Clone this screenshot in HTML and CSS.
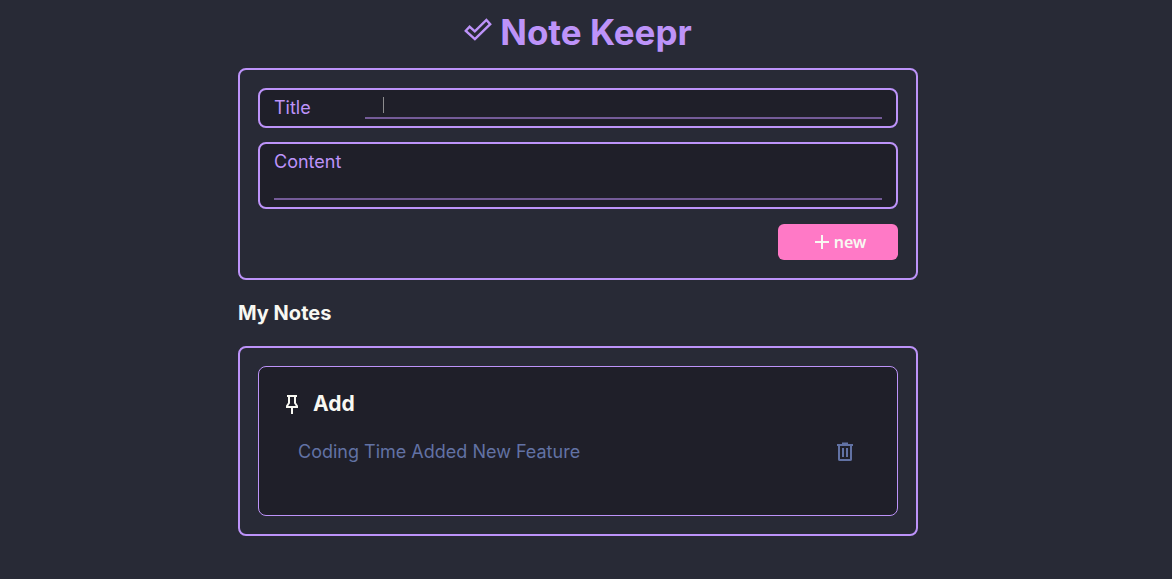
FILE: index.html
```html
<!DOCTYPE html>
<html lang="en">
<head>
<meta charset="utf-8">
<title>Note Keepr</title>
<meta name="viewport" content="width=device-width, initial-scale=1">
<link rel="stylesheet" href="styles.css">
</head>
<body>
<main class="app">
  <h1 class="brand">
    <svg class="brand-icon" viewBox="0 0 28 24" aria-hidden="true"><path d="M1.8 12.8 5.6 8.6 10.8 13.4 22.4 2 26.2 6.2 10.9 21.2Z"/></svg>
    <span>Note Keepr</span>
  </h1>

  <form class="panel form">
    <div class="field field-row">
      <label class="label" for="title">Title</label>
      <div class="input-wrap">
        <input class="input" id="title" type="text" autocomplete="off">
        <span class="caret"></span>
      </div>
    </div>
    <div class="field field-stack">
      <label class="label" for="content">Content</label>
      <textarea class="input area" id="content" rows="1"></textarea>
    </div>
    <button class="new-button" type="button">
      <svg class="plus" viewBox="0 0 16 16" aria-hidden="true"><path d="M1 8H15M8 1V15"/></svg>
      <span>new</span>
    </button>
  </form>

  <h2 class="section-title">My Notes</h2>

  <section class="panel">
    <article class="note">
      <h3 class="note-title">
        <svg class="pin" viewBox="0 0 14 20" aria-hidden="true"><path d="M2 2H12M4 2V9L2 12V13.5M10 2V9L12 12V13.5M1 13H13M7 13V20"/></svg>
        <span>Add</span>
      </h3>
      <div class="note-body">
        <p class="note-text">Coding Time Added New Feature</p>
        <button class="delete" type="button" aria-label="Delete note">
          <svg class="trash" viewBox="0 0 18 20" aria-hidden="true"><path d="M1 3H17M6 1.5H12M3 3V17.5Q3 18 4 18H14Q15 18 15 17.5V3M7 6V15M11 6V15"/></svg>
        </button>
      </div>
    </article>
  </section>
</main>
</body>
</html>
```
FILE: styles.css
```css
* {
  box-sizing: border-box;
}

body {
  margin: 0;
  padding: 12px 16px 40px 0;
  background: #282a36;
  color: #f8f8f2;
  font-family: Inter, sans-serif;
  font-size: 18px;
}

h1, h2, h3, p {
  margin: 0;
}

svg {
  display: block;
  fill: none;
  stroke: currentColor;
  stroke-width: 2;
}

.app {
  max-width: 680px;
  margin: 0 auto;
}

.brand {
  display: flex;
  justify-content: center;
  gap: 8px;
  margin-bottom: 16px;
  color: #bd93f9;
  font-size: 35px;
  line-height: 40px;
}

.brand-icon {
  width: 28px;
  height: 24px;
  margin-top: 6px;
  stroke-width: 2.4;
}

.panel {
  padding: 18px;
  border: 2px solid #bd93f9;
  border-radius: 8px;
}

.form {
  display: flex;
  flex-direction: column;
  gap: 14px;
}

.field {
  display: flex;
  padding: 6px 14px 7px;
  border: 2px solid #bd93f9;
  border-radius: 8px;
  background: #1f1f29;
}

.field-row {
  height: 40px;
}

.field-stack {
  flex-direction: column;
}

.label {
  width: 91px;
  color: #bd93f9;
  line-height: 24px;
}

.input-wrap {
  position: relative;
  display: flex;
  flex: 1;
}

.input {
  width: 100%;
  min-width: 0;
  padding: 0 18px;
  border: 0;
  border-bottom: 2px solid #745b98;
  outline: 0;
  background: transparent;
  color: #f8f8f2;
  font: inherit;
}

.area {
  display: block;
  height: 26px;
  resize: none;
  overflow: hidden;
}

.caret {
  position: absolute;
  top: 1px;
  left: 18px;
  width: 1px;
  height: 16px;
  background: #8d8c8e;
}

.new-button {
  display: flex;
  align-self: flex-end;
  align-items: center;
  justify-content: center;
  gap: 4px;
  width: 120px;
  height: 36px;
  margin-top: 1px;
  padding: 0 0 0 4px;
  border: 0;
  border-radius: 6px;
  background: #ff79c6;
  color: #f8f8f2;
  font: 600 16px "Noto Sans", sans-serif;
}

.plus {
  width: 16px;
  height: 16px;
}

.section-title {
  margin: 20px 0;
  font-size: 20px;
  line-height: 26px;
}

.note {
  min-height: 150px;
  padding: 24px 40px 50px 26px;
  border: 1px solid #bd93f9;
  border-radius: 8px;
  background: #1f1f29;
}

.note-title {
  display: flex;
  align-items: center;
  gap: 14px;
  font-size: 21px;
  line-height: 26px;
}

.pin {
  width: 14px;
  height: 20px;
}

.note-body {
  display: flex;
  align-items: center;
  justify-content: space-between;
  margin-top: 22px;
  padding-left: 13px;
  color: #6272a4;
}

.note-text {
  line-height: 26px;
}

.delete {
  padding: 0 3px;
  border: 0;
  background: transparent;
  color: inherit;
}

.trash {
  width: 18px;
  height: 20px;
}
```
